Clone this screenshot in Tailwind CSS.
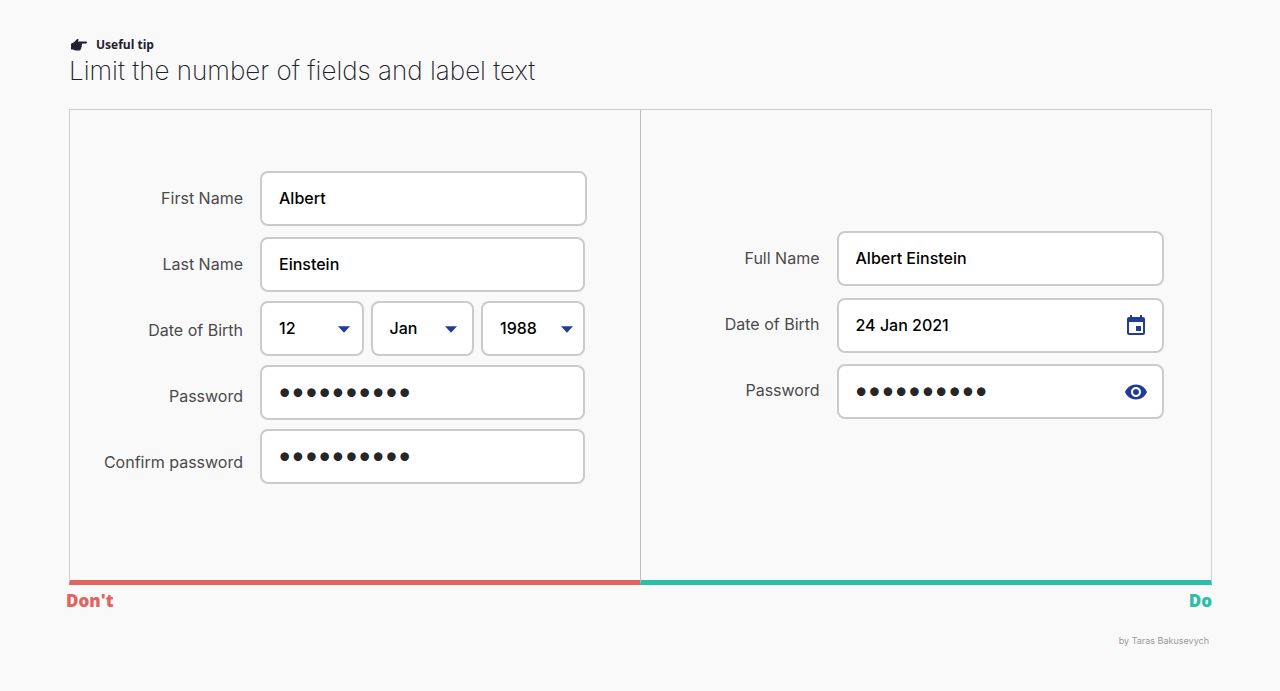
<!DOCTYPE html>
<html lang="en">
<head>
<meta charset="utf-8">
<meta name="viewport" content="width=device-width, initial-scale=1">
<title>Limit the number of fields and label text</title>
<script src="https://cdn.jsdelivr.net/npm/@tailwindcss/browser@4"></script>
</head>
<body class="min-h-screen bg-[#f9f9f9] pt-[37px] pr-[68px] pl-[69px] font-['Inter',sans-serif] text-[#4a4a4a]">
<header>
  <p class="flex h-4 items-center gap-[9px] pl-0.5 font-['Open_Sans',sans-serif] text-xs font-bold text-[#202030]">
    <svg class="h-3 w-4" viewBox="0 0 16 12" fill="currentColor" aria-hidden="true"><path d="M0 4.800 3 3.200 5.600.500Q7-.6 7.500.400 7.700 1.300 6.800 2.600H15.200Q16 2.800 16 3.500 16 4.200 15.200 4.400L10.600 4.800Q11.400 5.700 10.600 6.600 11.200 7.500 10.300 8.300 10.700 9.300 9.700 10 9.800 11.300 8.300 11.500H5Q3.200 11.400 2.200 10.600L0 10.400Z"/></svg>
    Useful tip
  </p>
  <h1 class="text-[26px] leading-9 font-extralight text-[#202028]">Limit the number of fields and label text</h1>
</header>

<main class="mt-5 grid grid-cols-2">
  <section>
    <form class="flex h-[476px] gap-[17px] border border-r-0 border-b-[5px] border-[#cfcfcf] border-b-[#e06560] pt-[61px] pr-[54px]">
      <div class="flex w-[173px] flex-col gap-[11px] text-right text-base">
        <label for="first" class="leading-[55px]">First Name</label>
        <label for="last" class="leading-[55px]">Last Name</label>
        <label for="day" class="leading-[55px]">Date of Birth</label>
        <label for="pass" class="leading-[55px]">Password</label>
        <label for="confirm" class="leading-[55px]">Confirm password</label>
      </div>
      <div class="flex min-w-0 flex-1 flex-col text-base font-medium text-black">
        <input id="first" type="text" value="Albert" class="h-[55px] w-full rounded-lg border-2 border-[#cbcbcb] bg-white px-[17px] pb-0.5">
        <div class="mt-[11px] flex flex-col pr-0.5">
          <input id="last" type="text" value="Einstein" class="h-[55px] w-full rounded-lg border-2 border-[#cbcbcb] bg-white px-[17px] pb-0.5">
          <div class="mt-[9px] grid grid-cols-3 gap-[7px]">
            <div class="relative">
              <select id="day" class="h-[55px] w-full appearance-none rounded-lg border-2 border-[#cbcbcb] bg-white px-[17px] pb-0.5"><option>12</option></select>
              <svg class="pointer-events-none absolute top-[25px] right-[14px] h-[7px] w-3" viewBox="0 0 12 7" fill="#1f3c96" aria-hidden="true"><path d="M0 .2H12L6 6.800Z"/></svg>
            </div>
            <div class="relative">
              <select id="month" aria-label="Month of birth" class="h-[55px] w-full appearance-none rounded-lg border-2 border-[#cbcbcb] bg-white px-[17px] pb-0.5"><option>Jan</option></select>
              <svg class="pointer-events-none absolute top-[25px] right-[17px] h-[7px] w-3" viewBox="0 0 12 7" fill="#1f3c96" aria-hidden="true"><path d="M0 .2H12L6 6.800Z"/></svg>
            </div>
            <div class="relative">
              <select id="year" aria-label="Year of birth" class="h-[55px] w-full appearance-none rounded-lg border-2 border-[#cbcbcb] bg-white px-[17px] pb-0.5"><option>1988</option></select>
              <svg class="pointer-events-none absolute top-[25px] right-3 h-[7px] w-3" viewBox="0 0 12 7" fill="#1f3c96" aria-hidden="true"><path d="M0 .2H12L6 6.800Z"/></svg>
            </div>
          </div>
          <input id="pass" type="password" value="relativity" class="mt-[9px] h-[55px] w-full rounded-lg border-2 border-[#cbcbcb] bg-white px-4 pb-1 font-['Lato',sans-serif] text-[23px] font-normal text-[#262626]">
          <input id="confirm" type="password" value="relativity" class="mt-[9px] h-[55px] w-full rounded-lg border-2 border-[#cbcbcb] bg-white px-4 pb-1 font-['Lato',sans-serif] text-[23px] font-normal text-[#262626]">
        </div>
      </div>
    </form>
    <h2 class="mt-0.5 -ml-[3px] font-['Open_Sans',sans-serif] text-[17px] leading-7 font-extrabold text-[#e06560]">Don't</h2>
  </section>

  <section class="-ml-px">
    <form class="flex h-[476px] gap-[17px] border border-b-[5px] border-[#cfcfcf] border-b-[#2bbfa8] border-l-[#bdbdbd] pt-[121px] pr-[47px]">
      <div class="flex w-[179px] flex-col gap-[11px] text-right text-base">
        <label for="full" class="leading-[55px]">Full Name</label>
        <label for="birth" class="leading-[55px]">Date of Birth</label>
        <label for="secret" class="leading-[55px]">Password</label>
      </div>
      <div class="flex min-w-0 flex-1 flex-col gap-3 text-base font-medium text-black">
        <input id="full" type="text" value="Albert Einstein" class="h-[55px] w-full rounded-lg border-2 border-[#cbcbcb] bg-white px-[17px] pb-0.5">
        <div class="relative">
          <input id="birth" type="text" value="24 Jan 2021" class="h-[55px] w-full rounded-lg border-2 border-[#cbcbcb] bg-white pr-12 pb-0.5 pl-[17px]">
          <button type="button" aria-label="Open calendar" class="absolute top-4 right-4 size-6 text-[#1f3c96]">
            <svg class="size-6" viewBox="0 0 24 24" fill="currentColor" aria-hidden="true"><path d="M17 12h-5v5h5v-5zM16 1v2H8V1H6v2H5c-1.110 0-1.990.9-1.990 2L3 19c0 1.100.890 2 2 2h14c1.100 0 2-.9 2-2V5c0-1.100-.9-2-2-2h-1V1h-2zm3 18H5V8h14v11z"/></svg>
          </button>
        </div>
        <div class="relative -mt-px">
          <input id="secret" type="password" value="relativity" class="h-[55px] w-full rounded-lg border-2 border-[#cbcbcb] bg-white pr-12 pb-1 pl-4 font-['Lato',sans-serif] text-[23px] font-normal text-[#262626]">
          <button type="button" aria-label="Show password" class="absolute top-4 right-4 size-6 text-[#1f3c96]">
            <svg class="size-6" viewBox="0 0 24 24" fill="currentColor" aria-hidden="true"><path d="M12 4.500C7 4.500 2.730 7.610 1 12c1.730 4.390 6 7.500 11 7.500s9.270-3.110 11-7.500c-1.730-4.390-6-7.500-11-7.500zM12 17c-2.760 0-5-2.240-5-5s2.240-5 5-5 5 2.240 5 5-2.240 5-5 5zm0-8c-1.660 0-3 1.340-3 3s1.340 3 3 3 3-1.340 3-3-1.340-3-3-3z"/></svg>
          </button>
        </div>
      </div>
    </form>
    <h2 class="mt-0.5 text-right font-['Open_Sans',sans-serif] text-[17px] leading-7 font-extrabold text-[#2bbfa8]">Do</h2>
  </section>
</main>
<footer class="mt-[18px] pr-[3px] text-right text-[9px] leading-4 text-[#999]">by Taras Bakusevych</footer>
</body>
</html>
